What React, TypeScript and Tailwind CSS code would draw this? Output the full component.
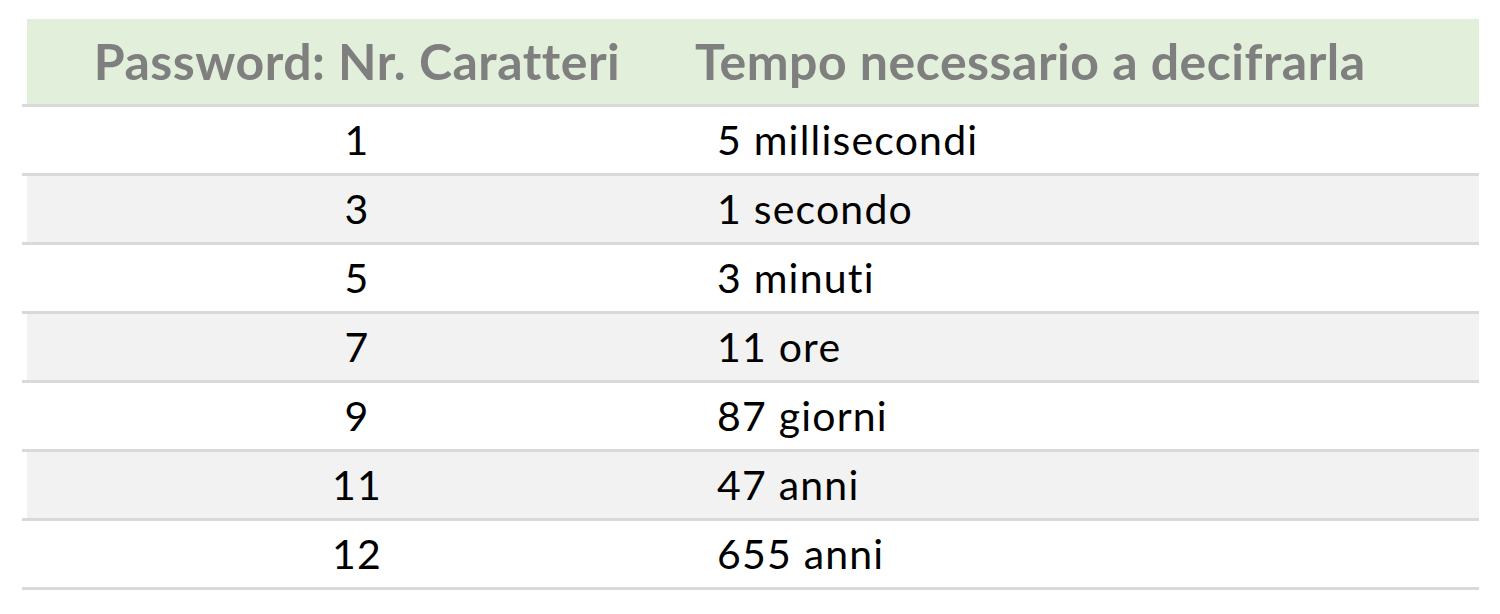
const rows: [string, string][] = [
  ['1', '5 millisecondi'],
  ['3', '1 secondo'],
  ['5', '3 minuti'],
  ['7', '11 ore'],
  ['9', '87 giorni'],
  ['11', '47 anni'],
  ['12', '655 anni'],
];

const font = { fontFamily: 'Lato, "Open Sans", sans-serif' };

export default function App() {
  return (
    <div
      className="h-[614px] w-[1500px] bg-white pl-[22px] pt-[19px] [font-variant-ligatures:none]"
      style={font}
    >
      <div className="w-[1457px]">
        <div className="border-b-[3px] border-[#d9d9d9]">
          <div className="ml-[5px] flex h-[85px] items-center bg-[#e2efda] text-[50px] font-bold tracking-[0.5px] text-[#7f7f7f]">
            <div className="w-[660px] text-center">Password: Nr. Caratteri</div>
            <div className="pl-[8px]">Tempo necessario a decifrarla</div>
          </div>
        </div>
        {rows.map(([n, t], i) => (
          <div key={n} className="border-b-[3px] border-[#d9d9d9]">
            <div
              className={
                'ml-[5px] flex h-[66px] items-center text-[41px] tracking-[1.2px] text-black ' +
                (i % 2 === 1 ? 'bg-[#f2f2f2]' : 'bg-white')
              }
            >
              <div className="w-[660px] text-center">{n}</div>
              <div className="pl-[30px]">{t}</div>
            </div>
          </div>
        ))}
      </div>
    </div>
  );
}
